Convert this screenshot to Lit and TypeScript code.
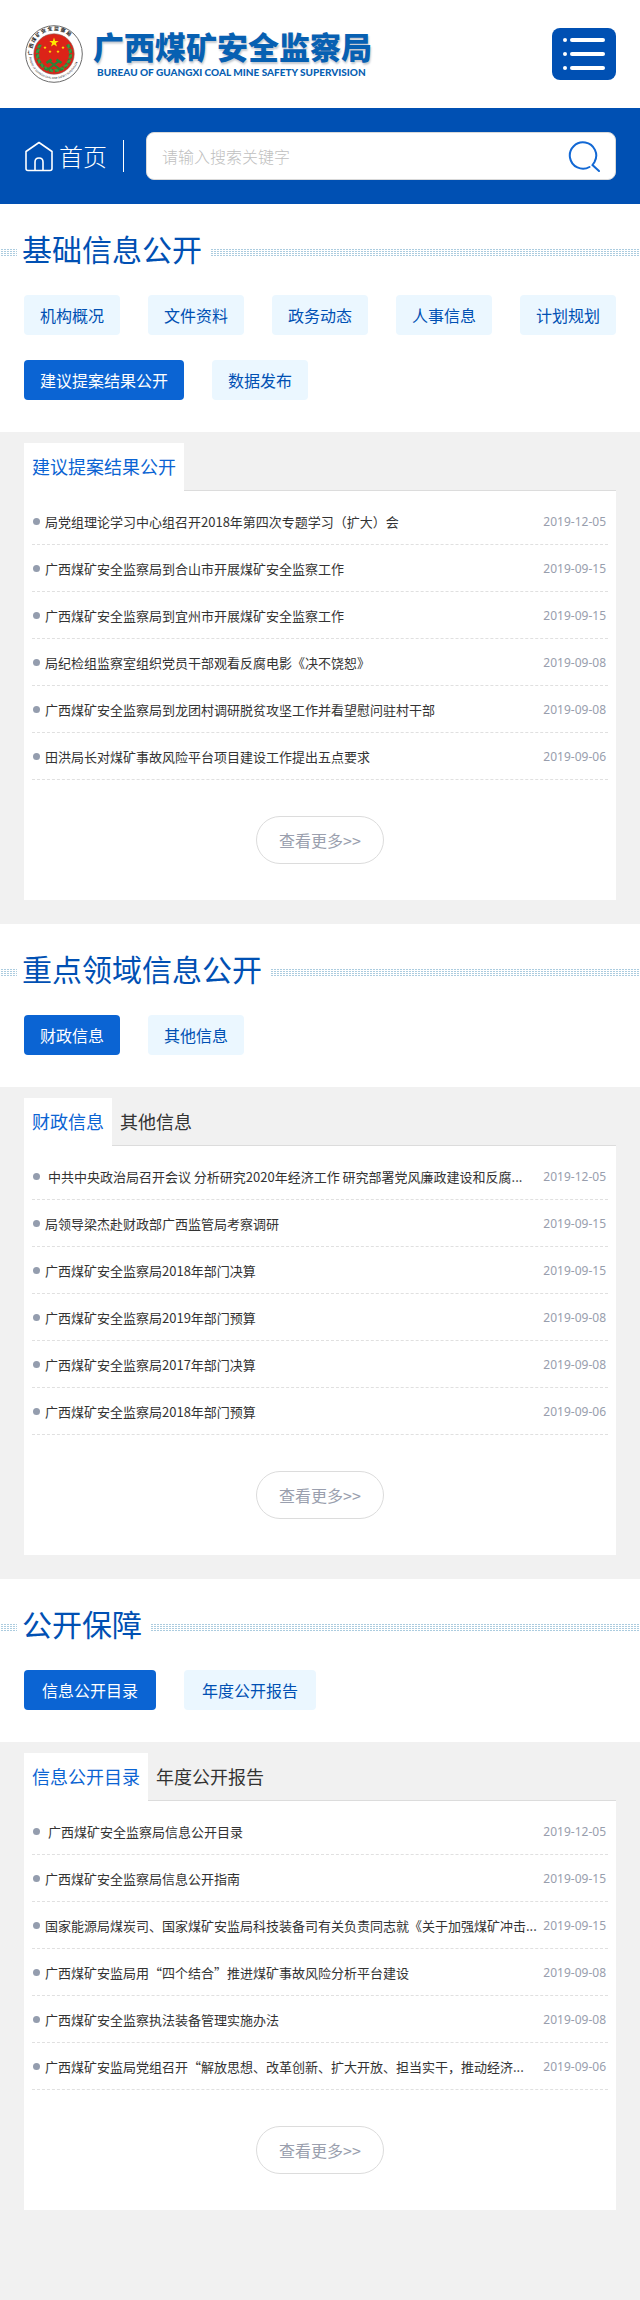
import { LitElement, html, css, svg } from "lit";
import { customElement, property, state } from "lit/decorators.js";
import { classMap } from "lit/directives/class-map.js";

type Row = [title: string, date: string];
interface Block {
  title: string;
  chips: string[];
  active: number;
  roomy?: boolean;
  tabs: string[];
  rows: Row[];
}

const DATES = ["2019-12-05", "2019-09-15", "2019-09-15", "2019-09-08", "2019-09-08", "2019-09-06"];
const dated = (titles: string[]): Row[] => titles.map((t, i) => [t, DATES[i]]);

const BLOCKS: Block[] = [
  {
    title: "基础信息公开",
    chips: ["机构概况", "文件资料", "政务动态", "人事信息", "计划规划", "建议提案结果公开", "数据发布"],
    active: 5,
    tabs: ["建议提案结果公开"],
    rows: dated([
      "局党组理论学习中心组召开2018年第四次专题学习（扩大）会",
      "广西煤矿安全监察局到合山市开展煤矿安全监察工作",
      "广西煤矿安全监察局到宜州市开展煤矿安全监察工作",
      "局纪检组监察室组织党员干部观看反腐电影《决不饶恕》",
      "广西煤矿安全监察局到龙团村调研脱贫攻坚工作并看望慰问驻村干部",
      "田洪局长对煤矿事故风险平台项目建设工作提出五点要求",
    ]),
  },
  {
    title: "重点领域信息公开",
    chips: ["财政信息", "其他信息"],
    active: 0,
    tabs: ["财政信息", "其他信息"],
    rows: dated([
      "\u00a0中共中央政治局召开会议 分析研究2020年经济工作 研究部署党风廉政建设和反腐...",
      "局领导梁杰赴财政部广西监管局考察调研",
      "广西煤矿安全监察局2018年部门决算",
      "广西煤矿安全监察局2019年部门预算",
      "广西煤矿安全监察局2017年部门决算",
      "广西煤矿安全监察局2018年部门预算",
    ]),
  },
  {
    title: "公开保障",
    chips: ["信息公开目录", "年度公开报告"],
    active: 0,
    roomy: true,
    tabs: ["信息公开目录", "年度公开报告"],
    rows: dated([
      "\u00a0广西煤矿安全监察局信息公开目录",
      "广西煤矿安全监察局信息公开指南",
      "国家能源局煤炭司、国家煤矿安监局科技装备司有关负责同志就《关于加强煤矿冲击...",
      "广西煤矿安监局用“四个结合”推进煤矿事故风险分析平台建设",
      "广西煤矿安全监察执法装备管理实施办法",
      "广西煤矿安监局党组召开“解放思想、改革创新、扩大开放、担当实干，推动经济...",
    ]),
  },
];

const star = (cx: number, cy: number, r: number) => {
  const pts = Array.from({ length: 10 }, (_, i) => {
    const a = -Math.PI / 2 + (i * Math.PI) / 5;
    const q = i % 2 ? r * 0.4 : r;
    return `${(cx + q * Math.cos(a)).toFixed(2)},${(cy + q * Math.sin(a)).toFixed(2)}`;
  });
  return svg`<polygon points=${pts.join(" ")} fill="#ffe800"/>`;
};

const leaves = [100, 118, 136, 154, 172, 190, 208].flatMap((d) => [d, 180 - d]).map((d) => {
  const a = (d * Math.PI) / 180;
  const x = 29 + 16.5 * Math.cos(a);
  const y = 29 + 16.5 * Math.sin(a);
  return svg`<ellipse cx=${x} cy=${y} rx="2.6" ry="1.3" fill="#27863a" transform=${`rotate(${d + 60} ${x} ${y})`}/>
    <ellipse cx=${x} cy=${y} rx="2.6" ry="1.1" fill="#3a9a40" transform=${`rotate(${d + 125} ${x} ${y})`}/>`;
});

const emblem = svg`
  <svg class="emblem" viewBox="-1 -1 60 60" aria-hidden="true">
    <defs>
      <path id="arc-top" d="M7.5 32 A22 22 0 1 1 50.5 32"/>
      <path id="arc-low" d="M4 29 A25 25 0 0 0 54 29"/>
    </defs>
    <circle cx="29" cy="29" r="28.3" fill="#fff" stroke="#6b6b6b" stroke-width="1"/>
    <circle cx="29" cy="29" r="20.2" fill="#dc2318" stroke="#8a5a50" stroke-width=".6"/>
    <text class="ring" font-size="5" font-weight="700"><textPath href="#arc-top" startOffset="2">广 西 煤 矿 安 全 监 察 局</textPath></text>
    <text class="ring" font-size="2.6"><textPath href="#arc-low" startOffset="3">BUREAU OF GUANGXI COAL MINE SAFETY SUPERVISION</textPath></text>
    ${leaves}
    ${star(29, 17.5, 5)}${star(20, 22.5, 1.8)}${star(38, 22.5, 1.8)}${star(25, 26.5, 1.8)}${star(33, 26.5, 1.8)}
    <g stroke="#27863a" fill="none" stroke-width="2">
      <path d="M24 36 L36 45 M34 36 L22 45"/>
      <path d="M21.5 38 L26.5 34.5 M31.5 34.5 L36.5 38" stroke-width="2.6"/>
      <path d="M20 44.5 H25 M33 44.5 H38" stroke-width="1.6"/>
    </g>
  </svg>`;

@customElement("info-block")
export class InfoBlock extends LitElement {
  @property({ attribute: false }) block!: Block;
  @state() private tab = 0;

  static styles = css`
    :host { display: block; }
    * { box-sizing: border-box; }
    a { color: inherit; text-decoration: none; }
    button { font: inherit; border: 0; cursor: pointer; }
    .head { background: #fff; padding-bottom: 32px; }
    .heading {
      display: grid;
      grid-template-columns: 17px auto 1fr;
      align-items: center;
      column-gap: 5px;
      height: 91px;
    }
    .heading h2 { margin: 0 3px 0 0; padding-bottom: 3px; font-size: 30px; line-height: 40px; font-weight: 400; color: #0050b3; }
    .dots { height: 7px; margin-top: 6px; background: conic-gradient(from 90deg at 1px 1px, transparent 0 270deg, #acccdf 0) 0 0 / 3px 2px; }
    .chips { display: flex; flex-wrap: wrap; gap: 25px 28px; padding: 0 20px 0 24px; }
    .chip { height: 40px; padding: 0 16px; border-radius: 4px; background: #ebf7ff; color: #0050b3; font-size: 16px; line-height: 40px; }
    .roomy .chip { padding: 0 18px; }
    .chip.on { background: #0b64d3; color: #fff; }
    .body { background: #f1f1f1; padding: 11px 24px 24px; }
    .tabs { display: flex; position: relative; border-bottom: 1px solid #dcdcdc; }
    .tab { height: 48px; margin-bottom: -1px; padding: 0 8px 3px; background: none; color: #333; font-size: 18px; line-height: 44px; }
    .tab.on { background: #fff; color: #0b64d3; }
    .panel { background: #fff; padding: 7px 8px 36px; }
    ul { margin: 0 0 36px; padding: 0; list-style: none; }
    li { display: flex; align-items: center; height: 47px; padding: 1px 2px 0 1px; border-bottom: 1px dashed #e0e0e0; }
    li::before { content: ""; flex: none; width: 7px; height: 7px; margin-right: 5px; border-radius: 50%; background: #949dae; }
    .name { flex: 1; min-width: 0; overflow: hidden; white-space: nowrap; font-size: 13px; line-height: 20px; color: #333; }
    time { flex: none; font-family: "Noto Sans", sans-serif; font-size: 12px; line-height: 20px; color: #989ead; }
    .more { display: block; width: 128px; height: 48px; margin: 0 auto; border: 1px solid #dcdcdc; border-radius: 24px; text-align: center; font-size: 16px; line-height: 46px; color: #9a9fae; }
  `;

  render() {
    const b = this.block;
    return html`
      <section>
        <div class="head">
          <div class="heading"><span class="dots"></span><h2>${b.title}</h2><span class="dots"></span></div>
          <nav class=${classMap({ chips: true, roomy: !!b.roomy })}>
            ${b.chips.map((c, i) => html`<a href="#" class=${classMap({ chip: true, on: i === b.active })}>${c}</a>`)}
          </nav>
        </div>
        <div class="body">
          <div class="tabs" role="tablist">
            ${b.tabs.map((t, i) => html`<button role="tab" aria-selected=${i === this.tab} class=${classMap({ tab: true, on: i === this.tab })} @click=${() => (this.tab = i)}>${t}</button>`)}
          </div>
          <div class="panel">
            <ul>
              ${b.rows.map(([t, d]) => html`<li><a class="name" href="#">${t}</a><time datetime=${d}>${d}</time></li>`)}
            </ul>
            <a class="more" href="#">查看更多&gt;&gt;</a>
          </div>
        </div>
      </section>`;
  }
}

@customElement("app-root")
export class AppRoot extends LitElement {
  static styles = css`
    :host { display: block; min-height: 100vh; background: #f1f1f1; font-family: "Noto Sans CJK SC", "Noto Sans", sans-serif; }
    * { box-sizing: border-box; }
    a { color: inherit; text-decoration: none; }
    button { border: 0; padding: 0; cursor: pointer; }
    .top { display: flex; align-items: center; justify-content: space-between; height: 108px; padding: 0 24px; background: #fff; }
    .brand { display: flex; align-items: center; gap: 9px; }
    .emblem { display: block; width: 60px; height: 60px; }
    .ring { font-family: "Noto Sans CJK SC", sans-serif; fill: #222; }
    .names { display: grid; color: #0760b2; }
    h1 { margin: 0; font-size: 31px; line-height: 36px; font-weight: 900; text-shadow: 1px 2px 2px #c4c9d0; }
    .en { padding: 0 4px; font-family: Lato, Roboto, sans-serif; font-size: 10px; line-height: 16px; font-weight: 900; }
    .menu { width: 64px; height: 52px; border-radius: 8px; background: #0050b3; }
    .menu svg { display: block; width: 64px; height: 52px; }
    .bar { display: flex; align-items: center; height: 96px; padding: 0 24px; background: #0050b3; color: #fff; }
    .home { display: flex; align-items: center; gap: 5px; font-size: 24px; line-height: 32px; font-weight: 300; }
    .home svg { width: 30px; height: 32px; }
    .rule { width: 1px; height: 32px; margin: 0 22px 0 16px; background: #fff; }
    .search { flex: 1; min-width: 0; display: flex; align-items: center; height: 48px; padding: 0 15px; border: 1px solid #d9d9d9; border-radius: 8px; background: #fff; }
    .search input { flex: 1; min-width: 0; border: 0; outline: 0; padding: 0; background: none; font: 300 16px/24px "Noto Sans CJK SC", sans-serif; color: #333; }
    .search input::placeholder { color: #bfbfbf; opacity: 1; }
    .search button { background: none; }
    .search svg { display: block; width: 32px; height: 32px; }
  `;

  render() {
    return html`
      <header>
        <div class="top">
          <a class="brand" href="#">
            ${emblem}
            <div class="names">
              <h1>广西煤矿安全监察局</h1>
              <span class="en">BUREAU OF GUANGXI COAL MINE SAFETY SUPERVISION</span>
            </div>
          </a>
          <button class="menu" aria-label="菜单">
            <svg viewBox="0 0 64 52" fill="#fff">
              ${[12, 26, 40].map((y) => svg`<circle cx="13" cy=${y} r="2"/><rect x="18" y=${y - 2} width="35" height="4" rx="2"/>`)}
            </svg>
          </button>
        </div>
        <div class="bar">
          <a class="home" href="#">
            <svg viewBox="0 0 30 32" fill="none" stroke="#fff" stroke-width="1.6" stroke-linejoin="round">
              <path d="M2 11.5 L15 2.5 L28 11.5 V28.5 Q28 30.5 26 30.5 H4 Q2 30.5 2 28.5 Z"/>
              <path d="M11 30.5 V22 Q11 18 15 18 Q19 18 19 22 V30.5"/>
            </svg>
            首页
          </a>
          <span class="rule"></span>
          <form class="search" role="search" @submit=${(e: Event) => e.preventDefault()}>
            <input type="search" aria-label="搜索" placeholder="请输入搜索关键字" />
            <button type="submit" aria-label="搜索">
              <svg viewBox="0 0 32 32" fill="none" stroke="#1268d4" stroke-width="2" stroke-linecap="round">
                <path d="M21.5 27 A13.2 13.2 0 1 1 26.5 22 L24.5 25 L31 31"/>
              </svg>
            </button>
          </form>
        </div>
      </header>
      <main>${BLOCKS.map((b) => html`<info-block .block=${b}></info-block>`)}</main>`;
  }
}
